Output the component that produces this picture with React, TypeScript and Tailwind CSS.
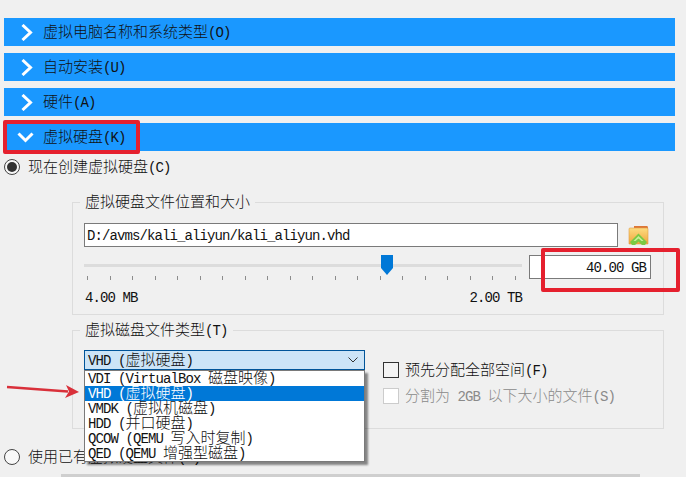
const fontCjk = { fontFamily: '"Noto Sans CJK SC", sans-serif' };

// mixed text: latin runs are half the width of the CJK glyphs, like the bitmap font in the shot
const Mix = ({ text }: { text: string }) => (
  <span className="inline-block -translate-y-px whitespace-pre text-[15px] font-light leading-none" style={fontCjk}>
    {text.split(/([\x00-\x7f]+)/).map((part, i) =>
      i % 2 === 1 ? (
        <span key={i} className="font-['Liberation_Mono',monospace] text-[14px] font-normal tracking-[-0.9px]">
          {part}
        </span>
      ) : (
        part
      )
    )}
  </span>
);

const Bar = ({ label, open }: { label: string; open?: boolean }) => (
  <div className="flex h-[28px] items-center gap-[9px] bg-[#1a98ff] pl-[13px] text-[#111]">
    <svg width="17" height="17" viewBox="0 0 17 17" fill="none" stroke="#fff" strokeWidth="3">
      {open ? <path d="M1.5 4.5 L8.5 11.5 L15.5 4.5" /> : <path d="M5.5 1 L13.5 8.5 L5.5 16" />}
    </svg>
    <Mix text={label} />
  </div>
);

const Radio = ({ checked }: { checked?: boolean }) => (
  <span className="flex h-[16px] w-[16px] items-center justify-center rounded-full border border-[#444] bg-[#f8f8f8]">
    {checked && <span className="h-[10px] w-[10px] rounded-full bg-[#333]" />}
  </span>
);

const FolderIcon = () => (
  <svg width="21" height="21" viewBox="0 0 21 21">
    <defs>
      <linearGradient id="folderBody" x1="0" y1="0" x2="0" y2="1">
        <stop offset="0" stopColor="#fcdc80" />
        <stop offset="1" stopColor="#f0a53c" />
      </linearGradient>
    </defs>
    <path d="M6 1 H19 Q20 1 20 3 V6 H6 Z" fill="#dd7738" />
    <path d="M1 4 Q1 3 2 3 H19 Q20 3 20 4 V19 H1 Z" fill="url(#folderBody)" stroke="#e29a45" strokeWidth="0.6" />
    <path d="M10.5 8.5 L19 17 L17 20 H14 L10.5 16.5 L7 20 H4 L2 17 Z" fill="#7ac943" />
    <path d="M10.5 11 L15.5 16 H13.5 L10.5 13.5 L7.5 16 H5.5 Z" fill="#c9ee9b" />
  </svg>
);

const fileTypes = [
  "VDI (VirtualBox 磁盘映像)",
  "VHD (虚拟硬盘)",
  "VMDK (虚拟机磁盘)",
  "HDD (并口硬盘)",
  "QCOW (QEMU 写入时复制)",
  "QED (QEMU 增强型磁盘)",
];

export default function App() {
  return (
    <div className="relative h-[477px] w-[686px] overflow-hidden bg-[#f0f0f0] text-[#111]">
      <div className="flex w-[675px] flex-col pl-[4px] pt-[18px]">
        <div className="flex flex-col gap-[7px]">
          <Bar label="虚拟电脑名称和系统类型(O)" />
          <Bar label="自动安装(U)" />
          <Bar label="硬件(A)" />
          <Bar label="虚拟硬盘(K)" open />
        </div>

        <div className="mt-[8px] flex h-[16px] items-center gap-[8px]">
          <Radio checked />
          <Mix text="现在创建虚拟硬盘(C)" />
        </div>

        <fieldset className="ml-[68px] mt-[19px] w-[592px] border border-[#dcdcdc]">
          <legend className="ml-[7px] h-[16px] px-[5px] leading-[16px]">
            <Mix text="虚拟硬盘文件位置和大小" />
          </legend>
          <div className="px-[11px] pb-[9px] pt-[13px]">
            <div className="flex items-center">
              <div className="flex h-[24px] w-[534px] items-center border border-[#7a7a7a] bg-white pl-[2px]">
                <Mix text="D:/avms/kali_aliyun/kali_aliyun.vhd" />
              </div>
              <div className="ml-[10px]">
                <FolderIcon />
              </div>
            </div>
            <div className="mt-[8px] flex items-start gap-[7px]">
              <div className="relative w-[438px]">
                <div className="mt-[9px] h-[3px] bg-[#dcdcdc]" />
                <svg className="absolute left-[297px] top-0" width="12" height="20" viewBox="0 0 12 20">
                  <path d="M0 0 H12 V13 L6 20 L0 13 Z" fill="#0078d7" />
                </svg>
                <div className="mt-[9px] flex h-[4px] justify-between pl-[3px] pr-[6px]">
                  {Array.from({ length: 20 }).map((_, i) => (
                    <span key={i} className="w-px bg-[#8c8c8c]" />
                  ))}
                </div>
                <div className="mt-[9px] flex h-[16px] items-center justify-between pl-[1px]">
                  <Mix text="4.00 MB" />
                  <Mix text="2.00 TB" />
                </div>
              </div>
              <div className="flex h-[24px] w-[122px] items-center justify-end border border-[#7a7a7a] bg-white pr-[4px]">
                <Mix text="40.00 GB" />
              </div>
            </div>
          </div>
        </fieldset>

        <fieldset className="ml-[68px] mt-[7px] w-[592px] border border-[#dcdcdc]">
          <legend className="ml-[7px] h-[16px] px-[5px] leading-[16px]">
            <Mix text="虚拟磁盘文件类型(T)" />
          </legend>
          <div className="flex items-start px-[11px] pb-[24px] pt-[12px]">
            <div className="relative z-10 w-[281px]">
              <div className="flex h-[20px] items-center justify-between border border-[#005499] bg-[#cce4f7] pl-[3px] pr-[6px]">
                <Mix text="VHD (虚拟硬盘)" />
                <svg width="10" height="6" viewBox="0 0 10 6" fill="none" stroke="#333" strokeWidth="1">
                  <path d="M0.5 0.5 L5 5 L9.5 0.5" />
                </svg>
              </div>
              <div className="absolute left-0 top-[20px] h-[92px] w-full border border-[#7a7a7a] bg-white shadow-[3px_3px_2px_rgba(0,0,0,0.45)]">
                {fileTypes.map((type, i) => (
                  <div
                    key={type}
                    className={
                      i === 1
                        ? "flex h-[15px] items-center bg-[#0078d7] pl-[3px] text-white"
                        : "flex h-[15px] items-center pl-[3px]"
                    }
                  >
                    <Mix text={type} />
                  </div>
                ))}
              </div>
            </div>
            <div className="ml-[18px] mt-[12px] flex flex-col gap-[10px]">
              <div className="flex h-[16px] items-center gap-[6px]">
                <span className="h-[16px] w-[16px] border border-[#333] bg-[#f4f4f4]" />
                <Mix text="预先分配全部空间(F)" />
              </div>
              <div className="flex h-[16px] items-center gap-[6px] text-[#8a8a8a]">
                <span className="h-[16px] w-[16px] border border-[#cccccc] bg-white" />
                <Mix text="分割为 2GB 以下大小的文件(S)" />
              </div>
            </div>
          </div>
        </fieldset>

        <div className="mt-[20px] flex h-[16px] items-center gap-[8px]">
          <Radio />
          <Mix text="使用已有虚拟硬盘文件(U)" />
        </div>

        <div className="ml-[57px] mt-[9px] h-[6px] w-[579px] bg-[#cfcfcf]" />
      </div>

      {/* red annotations drawn over the screenshot */}
      <div className="absolute left-[3px] top-[120px] h-[34px] w-[137px] rounded-[2px] border-[4px] border-[#e5202e]" />
      <div className="absolute left-[541px] top-[248px] h-[44px] w-[139px] rounded-[2px] border-[4px] border-[#e5202e]" />
      <svg className="absolute left-[6px] top-[381px]" width="74" height="18" viewBox="0 0 74 18">
        <path d="M1 6 L62 10.5" stroke="#d9303a" strokeWidth="2.5" />
        <path d="M60 4 L73 11 L59 17 L63 10.5 Z" fill="#d9303a" />
      </svg>
    </div>
  );
}
